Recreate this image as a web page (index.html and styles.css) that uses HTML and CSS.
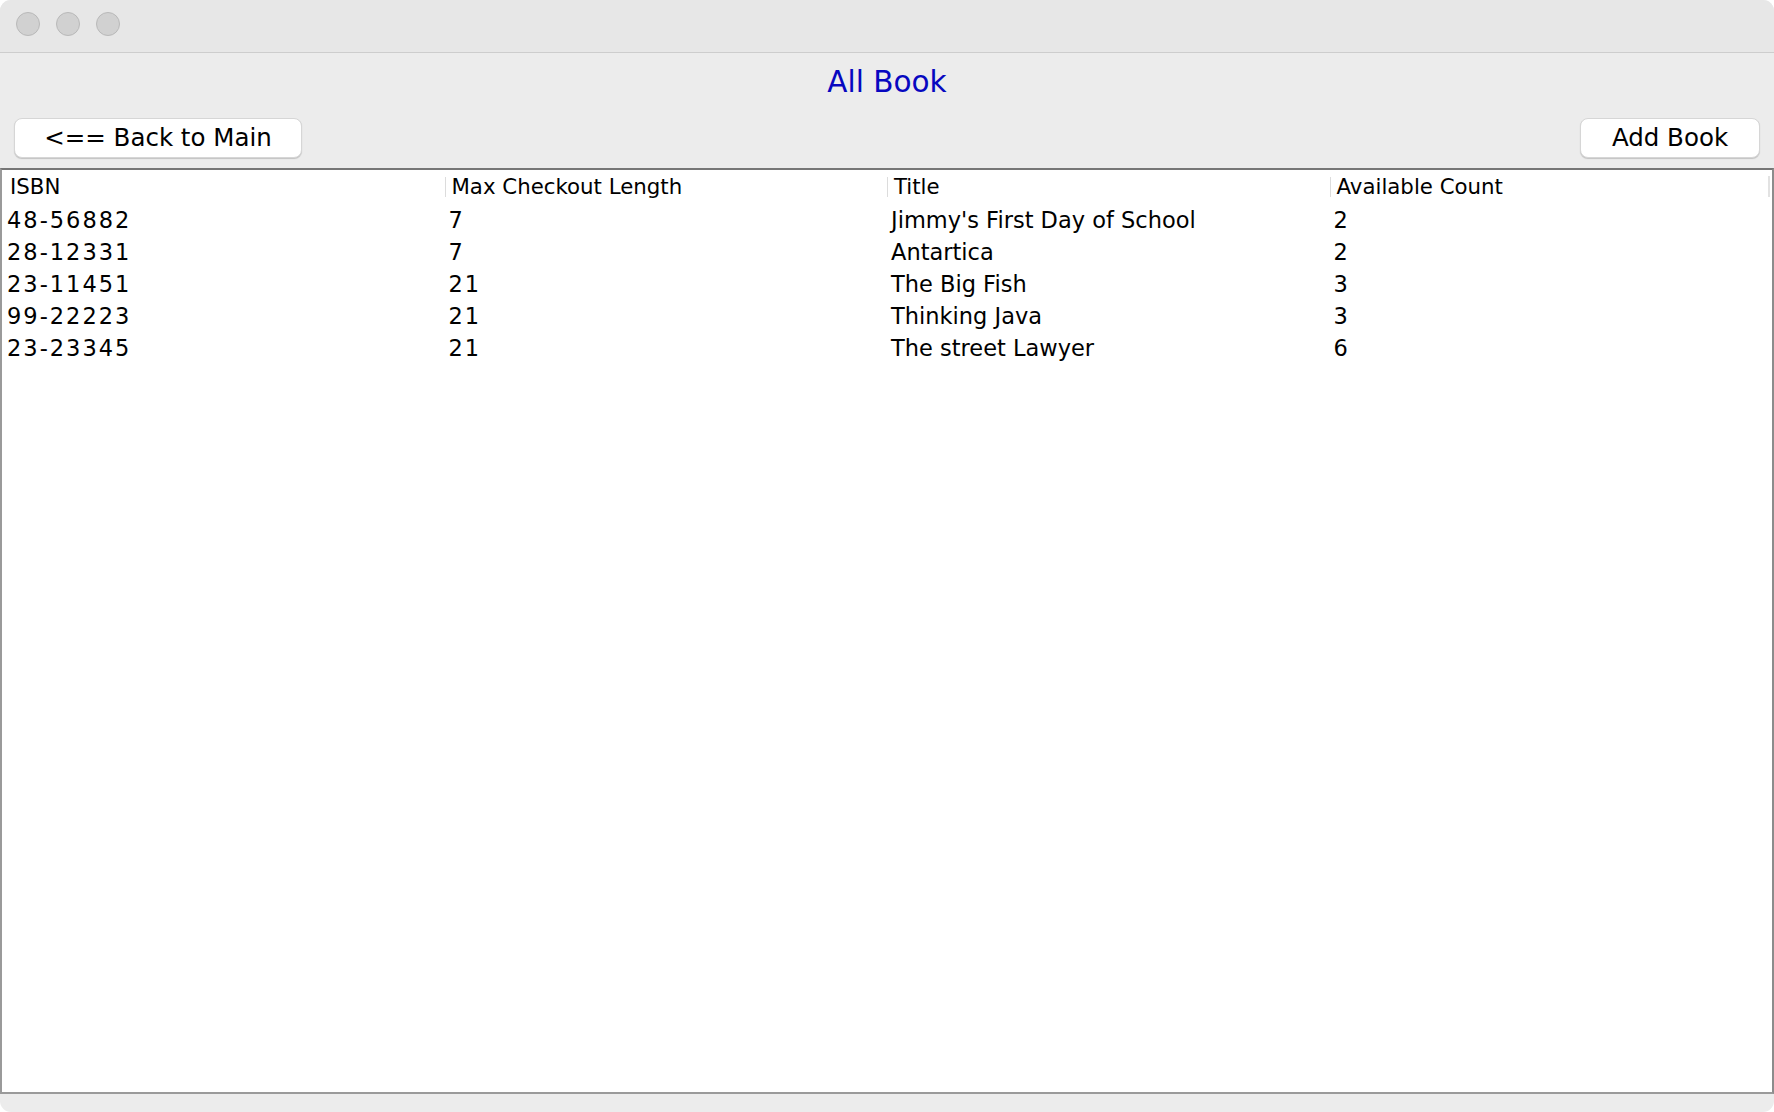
FILE: index.html
```html
<!DOCTYPE html>
<html lang="en">
<head>
<meta charset="utf-8">
<title>All Book</title>
<link rel="stylesheet" href="styles.css">
</head>
<body>
<div class="window">
  <div class="titlebar">
    <span class="light"></span>
    <span class="light"></span>
    <span class="light"></span>
  </div>
  <h1 class="heading">All Book</h1>
  <div class="toolbar">
    <button class="btn btn-back">&lt;== Back to Main</button>
    <button class="btn btn-add">Add Book</button>
  </div>
  <div class="table-wrap">
    <table class="books">
      <thead>
        <tr>
          <th class="first">ISBN</th>
          <th>Max Checkout Length</th>
          <th>Title</th>
          <th>Available Count</th>
        </tr>
      </thead>
      <tbody>
        <tr><td class="num">48-56882</td><td class="num">7</td><td>Jimmy's First Day of School</td><td class="num">2</td></tr>
        <tr><td class="num">28-12331</td><td class="num">7</td><td>Antartica</td><td class="num">2</td></tr>
        <tr><td class="num">23-11451</td><td class="num">21</td><td>The Big Fish</td><td class="num">3</td></tr>
        <tr><td class="num">99-22223</td><td class="num">21</td><td>Thinking Java</td><td class="num">3</td></tr>
        <tr><td class="num">23-23345</td><td class="num">21</td><td>The street Lawyer</td><td class="num">6</td></tr>
      </tbody>
    </table>
  </div>
</div>
</body>
</html>
```
FILE: styles.css
```css
html, body {
  margin: 0;
  padding: 0;
  background: #ffffff;
}

body {
  font-family: "DejaVu Sans", "Liberation Sans", sans-serif;
  color: #000;
}

.window {
  width: 1774px;
  height: 1112px;
  box-sizing: border-box;
  background: #ececec;
  border-radius: 11px;
  overflow: hidden;
  display: flex;
  flex-direction: column;
}

.titlebar {
  height: 53px;
  flex: 0 0 53px;
  box-sizing: border-box;
  background: #e7e7e7;
  border-bottom: 1px solid #cdcdcd;
  display: flex;
  align-items: flex-start;
  gap: 16px;
  padding: 12px 0 0 16px;
}

.light {
  width: 22px;
  height: 22px;
  border-radius: 50%;
  background: #d1d1d1;
  border: 1px solid #b9b9b9;
}

.heading {
  margin: 9px 0 0;
  height: 40px;
  line-height: 40px;
  font-size: 29.5px;
  font-weight: normal;
  text-align: center;
  color: #0707c0;
}

.toolbar {
  margin-top: 16px;
  display: flex;
  justify-content: space-between;
  padding: 0 14px;
}

.btn {
  height: 40px;
  box-sizing: border-box;
  background: #ffffff;
  border: 1px solid #d6d6d6;
  border-radius: 8px;
  box-shadow: 0 1px 1px rgba(0, 0, 0, 0.18);
  font-family: "DejaVu Sans", "Liberation Sans", sans-serif;
  font-size: 24.5px;
  color: #000;
  padding: 0;
  line-height: 38px;
  text-align: center;
}

.btn-back {
  width: 288px;
}

.btn-add {
  width: 180px;
}

.table-wrap {
  margin-top: 10px;
  flex: 1;
  margin-bottom: 18px;
  background: #fff;
  border-top: 2px solid #767676;
  border-left: 2px solid #9a9a9a;
  border-right: 2px solid #8c8c8c;
  border-bottom: 2px solid #9a9a9a;
}

.books {
  width: 100%;
  border-collapse: collapse;
  table-layout: fixed;
}

.books th {
  height: 34px;
  padding: 0 0 0 7px;
  font-size: 21.3px;
  font-weight: normal;
  text-align: left;
  vertical-align: middle;
  position: relative;
  line-height: 34px;
}

.books th::before {
  content: "";
  position: absolute;
  left: 0;
  top: 7px;
  height: 20px;
  border-left: 1px solid #dcdcdc;
}

.books th:last-child::after {
  content: "";
  position: absolute;
  right: 2px;
  top: 6px;
  height: 21px;
  border-left: 2px solid #e2e2e2;
}

.books th.first {
  padding-left: 8px;
}

.books th.first::before {
  display: none;
}

.books td {
  height: 32px;
  padding: 0 0 0 4px;
  font-size: 22.5px;
  line-height: 32px;
  white-space: nowrap;
}

.books td:first-child {
  padding-left: 5px;
}

.books td.num {
  letter-spacing: 2px;
}
```
